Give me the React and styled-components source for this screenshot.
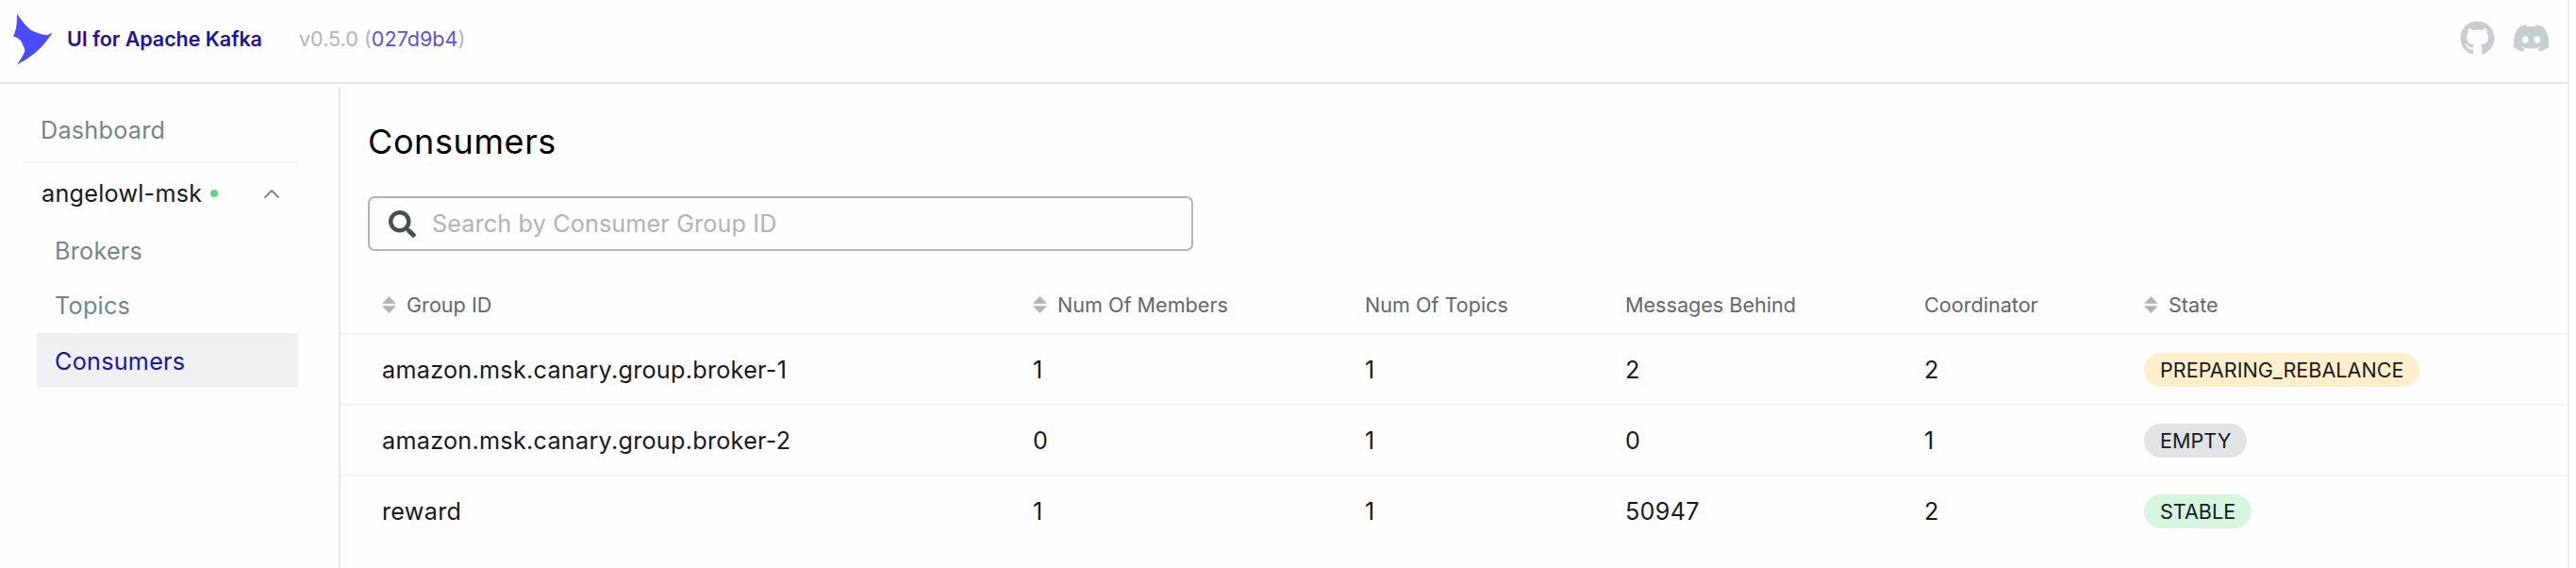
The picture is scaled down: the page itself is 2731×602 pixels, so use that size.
import React from 'react';
import styled, { createGlobalStyle } from 'styled-components';
import { FaDiscord, FaGithub, FaSearch } from 'react-icons/fa';

const Global = createGlobalStyle`
  html, body { margin: 0; padding: 0; background: #fefefe; }
  body { font-family: Inter, "Liberation Sans", sans-serif; overflow: hidden; }
  * { box-sizing: border-box; }
`;

const Page = styled.div`
  width: 2724px;
  height: 602px;
  border-right: 2px solid #e9ebec;
  display: flex;
  flex-direction: column;
`;

const Header = styled.header`
  height: 89px;
  flex: none;
  border-bottom: 2px solid #e3e6e8;
  display: flex;
  align-items: center;
  padding: 0 18px 6px 14px;
`;

const Brand = styled.div`
  display: flex;
  align-items: center;
  gap: 14px;
`;

const LogoMark = styled.svg`
  margin-top: 1px;
`;

const BrandName = styled.span`
  font-size: 21.6px;
  font-weight: 600;
  color: #1f129c;
  letter-spacing: -0.1px;
`;

const Version = styled.span`
  margin-left: 39px;
  font-size: 21.6px;
  color: #abb5ba;
`;

const Hash = styled.span`
  color: #5b52d6;
`;

const Links = styled.div`
  margin-left: auto;
  display: flex;
  align-items: center;
  gap: 18px;
  color: #c7ced1;
`;

const Body = styled.div`
  flex: 1;
  display: flex;
  min-height: 0;
`;

const Sidebar = styled.nav`
  width: 361px;
  flex: none;
  margin-top: 3px;
  border-right: 2px solid #e3e6e8;
  padding: 0 43px 0 24px;
  font-size: 25.2px;
  letter-spacing: 0.25px;
`;

const TopItem = styled.div`
  height: 81px;
  border-bottom: 2px solid #f1f2f3;
  padding: 12px 0 0 19px;
  display: flex;
  align-items: center;
  color: #73848c;
`;

const ClusterRow = styled.div`
  height: 64px;
  padding: 0 19px 0 20px;
  display: flex;
  align-items: center;
  color: #171a1c;
`;

const Dot = styled.span`
  width: 8px;
  height: 8px;
  border-radius: 50%;
  background: #5cd685;
  margin-left: 9px;
`;

const Chevron = styled.svg`
  margin-left: auto;
`;

const SubItem = styled.div`
  height: 58px;
  margin-left: 15px;
  padding: ${p => (p.$active ? '1px' : '0')} 0 0 19px;
  display: flex;
  align-items: center;
  color: ${p => (p.$active ? '#2013a8' : '#73848c')};
  background: ${p => (p.$active ? '#eef0f1' : 'transparent')};
`;

const Main = styled.main`
  flex: 1;
  min-width: 0;
`;

const TitleBar = styled.div`
  height: 119px;
  padding: 2px 29px 0;
  display: flex;
  align-items: center;
`;

const Title = styled.h1`
  margin: 0;
  font-size: 36px;
  font-weight: 400;
  letter-spacing: 0.6px;
  color: #000;
`;

const SearchBox = styled.label`
  margin-left: 29px;
  width: 875px;
  height: 58px;
  border: 2px solid #abb5ba;
  border-radius: 7px;
  display: flex;
  align-items: center;
  padding-left: 20px;
  gap: 15px;
  color: #454f54;
  font-size: 25.2px;
  letter-spacing: 0.13px;
`;

const SearchInput = styled.input`
  flex: 1;
  border: 0;
  outline: 0;
  background: transparent;
  font: inherit;
  letter-spacing: inherit;
  &::placeholder { color: #abb5ba; opacity: 1; }
`;

const Table = styled.table`
  margin-top: 27px;
  width: 100%;
  table-layout: fixed;
  border-collapse: collapse;
`;

const Th = styled.th`
  height: 61px;
  padding: 0 0 0 14px;
  text-align: left;
  font-size: 21.6px;
  font-weight: 400;
  color: #5c6970;
  border-bottom: 2px solid #f1f2f3;
  &:first-child { padding-left: 44px; }
`;

const ThInner = styled.span`
  display: flex;
  align-items: center;
  gap: 11px;
`;

const Td = styled.td`
  height: 75px;
  padding: 0 0 0 14px;
  font-size: 25.2px;
  letter-spacing: 0.27px;
  color: #171a1c;
  border-bottom: 2px solid #f1f2f3;
  &:first-child { padding-left: 44px; }
  tr:last-child > & { border-bottom: 0; }
`;

const Pill = styled.span`
  display: inline-flex;
  align-items: center;
  height: 36px;
  padding: 0 17px;
  border-radius: 18px;
  font-size: 21.6px;
  letter-spacing: 0;
  color: #171a1c;
  background: ${p => p.$bg};
`;

const SortIcon = () => (
  <svg width="15" height="18" viewBox="0 0 14 17" fill="#abb5ba">
    <path d="M7 0l7 7.4H0z" />
    <path d="M7 17L0 9.6h14z" />
  </svg>
);

const Logo = () => (
  <LogoMark width="43" height="55" viewBox="14 13.5 43 55" fill="#4c4cff">
    <path d="M18 14C22 20 27 27 33 31.500C40 35 47 36.500 50 36.700L56 34L50 42C42 53 30 62 18 68C20 65 24.500 59 26.500 53C25.500 51 26 50 24 47C23 43 21 40 14 38C16 34 18.500 27 18 14Z" />
  </LogoMark>
);

const columns = [
  { w: 720, label: 'Group ID', sort: true },
  { w: 352, label: 'Num Of Members', sort: true },
  { w: 276, label: 'Num Of Topics' },
  { w: 317, label: 'Messages Behind' },
  { w: 233, label: 'Coordinator' },
  { w: 463, label: 'State', sort: true },
];

const rows = [
  { id: 'amazon.msk.canary.group.broker-1', members: 1, topics: 1, behind: 2, coord: 2, state: 'PREPARING_REBALANCE', bg: '#ffeecc' },
  { id: 'amazon.msk.canary.group.broker-2', members: 0, topics: 1, behind: 0, coord: 1, state: 'EMPTY', bg: '#e1e2e6' },
  { id: 'reward', members: 1, topics: 1, behind: 50947, coord: 2, state: 'STABLE', bg: '#d6f5e0' },
];

export default function App() {
  return (
    <>
      <Global />
      <Page>
        <Header>
          <Brand>
            <Logo />
            <BrandName>UI for Apache Kafka</BrandName>
          </Brand>
          <Version>v0.5.0 (<Hash>027d9b4</Hash>)</Version>
          <Links>
            <FaGithub size={37} />
            <FaDiscord size={41} />
          </Links>
        </Header>
        <Body>
          <Sidebar>
            <TopItem>Dashboard</TopItem>
            <ClusterRow>
              angelowl-msk
              <Dot />
              <Chevron width="18" height="11" viewBox="0 0 18 11" fill="none" stroke="#73848c" strokeWidth="1.800">
                <path d="M1.500 9.500L9 2l7.500 7.500" />
              </Chevron>
            </ClusterRow>
            <SubItem>Brokers</SubItem>
            <SubItem>Topics</SubItem>
            <SubItem $active>Consumers</SubItem>
          </Sidebar>
          <Main>
            <TitleBar>
              <Title>Consumers</Title>
            </TitleBar>
            <SearchBox>
              <FaSearch size={29} />
              <SearchInput placeholder="Search by Consumer Group ID" readOnly />
            </SearchBox>
            <Table>
              <colgroup>
                {columns.map(c => <col key={c.label} width={c.w} />)}
              </colgroup>
              <thead>
                <tr>
                  {columns.map(c => (
                    <Th key={c.label}>
                      <ThInner>
                        {c.sort && <SortIcon />}
                        {c.label}
                      </ThInner>
                    </Th>
                  ))}
                </tr>
              </thead>
              <tbody>
                {rows.map(r => (
                  <tr key={r.id}>
                    <Td>{r.id}</Td>
                    <Td>{r.members}</Td>
                    <Td>{r.topics}</Td>
                    <Td>{r.behind}</Td>
                    <Td>{r.coord}</Td>
                    <Td><Pill $bg={r.bg}>{r.state}</Pill></Td>
                  </tr>
                ))}
              </tbody>
            </Table>
          </Main>
        </Body>
      </Page>
    </>
  );
}
